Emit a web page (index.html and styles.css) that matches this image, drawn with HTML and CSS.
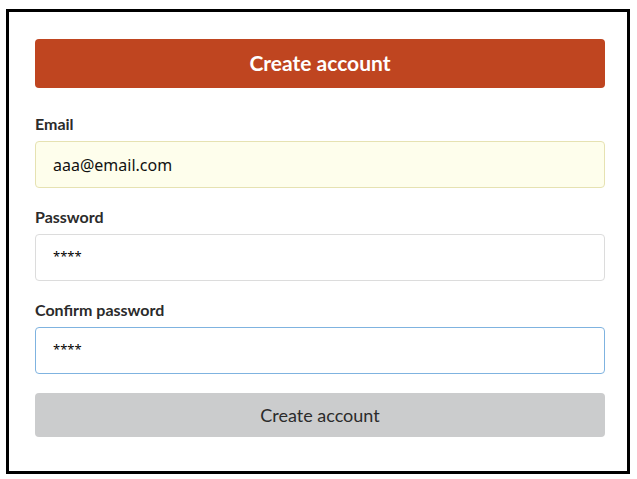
FILE: index.html
```html
<!DOCTYPE html>
<html lang="en">
<head>
<meta charset="utf-8">
<title>Create account</title>
<link rel="stylesheet" href="styles.css">
</head>
<body>
<div class="frame">
  <form class="form">
    <button type="button" class="btn btn-primary">Create account</button>
    <div class="fields">
      <div class="field">
        <label class="label" for="email">Email</label>
        <input class="input input-filled" id="email" type="text" value="aaa@email.com">
      </div>
      <div class="field">
        <label class="label" for="pw">Password</label>
        <input class="input input-secret" id="pw" type="text" value="****">
      </div>
      <div class="field">
        <label class="label" for="pw2">Confirm password</label>
        <input class="input input-secret input-focus" id="pw2" type="text" value="****">
      </div>
    </div>
    <button type="button" class="btn btn-secondary">Create account</button>
  </form>
</div>
</body>
</html>
```
FILE: styles.css
```css
* { box-sizing: border-box; }

html, body {
  margin: 0;
  padding: 0;
  background: #ffffff;
}

body {
  font-family: Lato, "Liberation Sans", sans-serif;
  color: #2b2b2b;
}

.frame {
  width: 624px;
  height: 465px;
  margin: 9px 0 0 6px;
  border: 3px solid #000000;
  padding: 27px 22px 34px 26px;
}

.form {
  display: flex;
  flex-direction: column;
  margin: 0;
}

.btn {
  display: block;
  width: 100%;
  border: none;
  border-radius: 4px;
  font-family: Lato, "Liberation Sans", sans-serif;
  padding: 0;
  cursor: pointer;
}

.btn-primary {
  height: 49px;
  padding-bottom: 2px;
  background: #bf4520;
  color: #ffffff;
  font-size: 21px;
  font-weight: 700;
}

.btn-secondary {
  height: 44px;
  margin-top: 19px;
  background: #cbcccd;
  color: #2b2b2b;
  font-size: 18px;
  font-weight: 400;
}

.fields {
  display: flex;
  flex-direction: column;
  gap: 19px;
  margin-top: 26px;
}

.field {
  display: flex;
  flex-direction: column;
  gap: 7px;
}

.label {
  font-size: 16px;
  line-height: 20px;
  font-weight: 700;
  color: #2b2b2b;
}

.input {
  height: 47px;
  width: 100%;
  border: 1px solid #dcdcdc;
  border-radius: 4px;
  padding: 0 17px;
  font-family: "Noto Sans", "Open Sans", sans-serif;
  font-size: 16px;
  color: #111111;
  background: #ffffff;
  outline: none;
}

.input-filled {
  background: #fefeec;
  border-color: #e6e2b2;
}

.input-secret {
  font-size: 13px;
  padding-bottom: 4px;
  color: #000000;
}

.input-focus {
  border-color: #7fb3e0;
}
```
